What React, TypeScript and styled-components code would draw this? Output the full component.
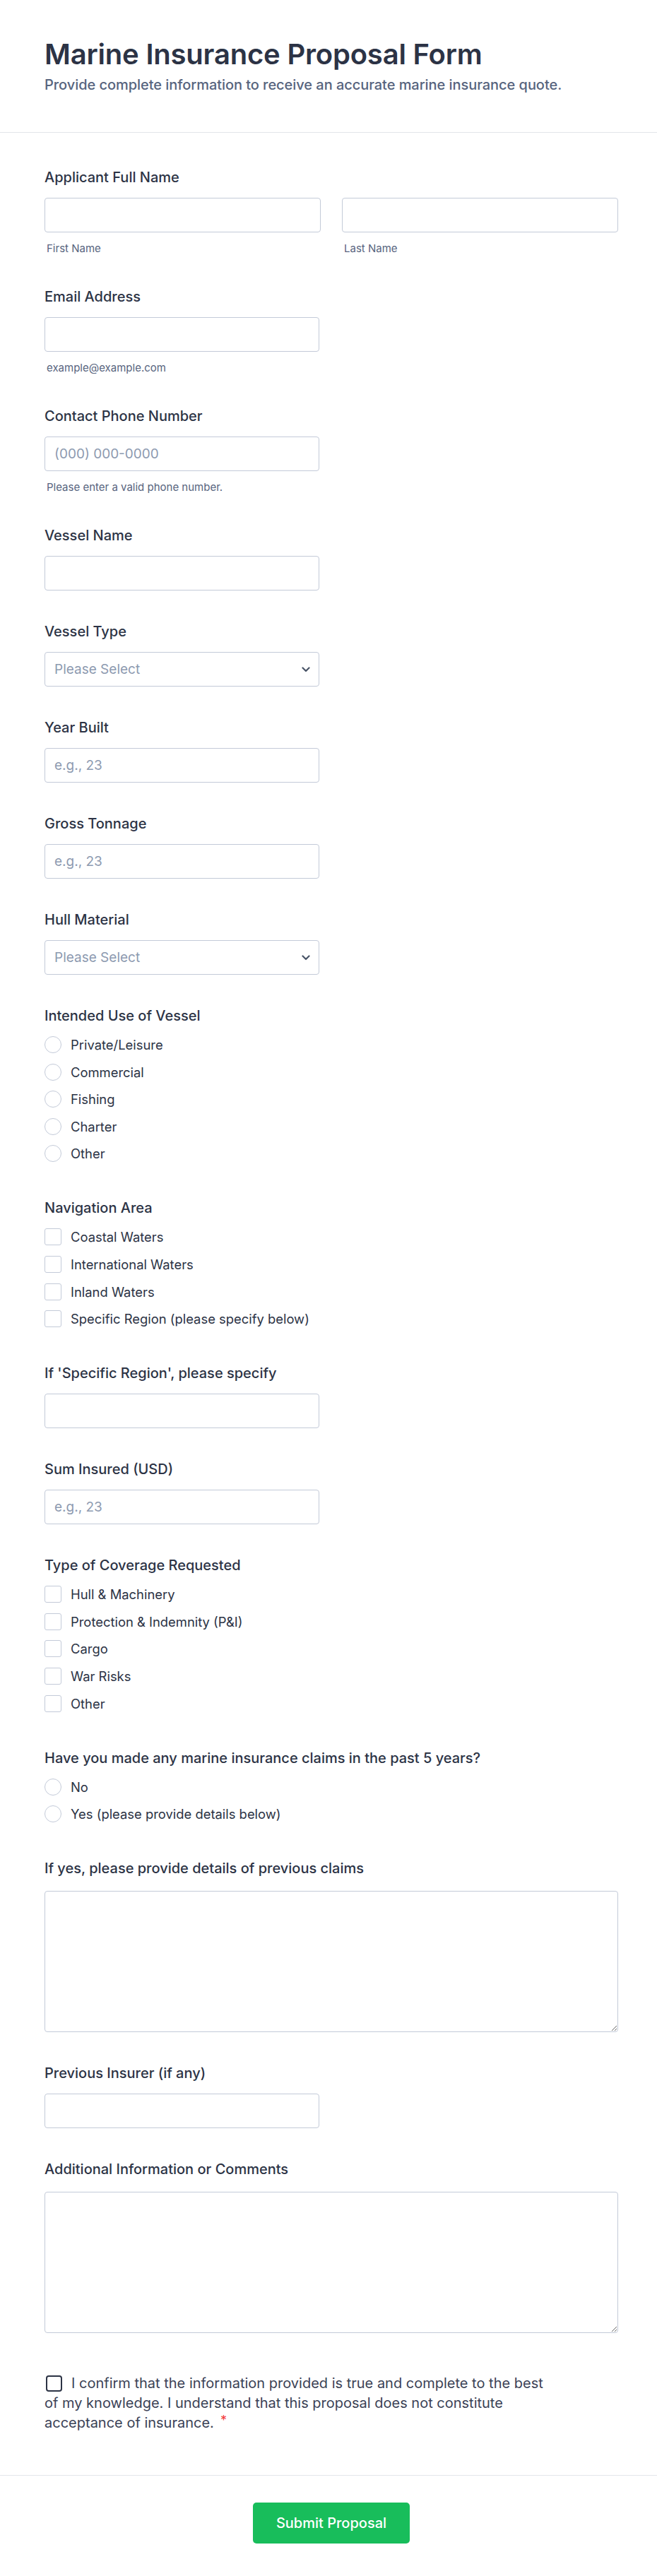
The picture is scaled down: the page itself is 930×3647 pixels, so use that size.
import React from "react";
import styled, { createGlobalStyle } from "styled-components";

const GlobalStyle = createGlobalStyle`
  * { box-sizing: border-box; }
  html, body { margin: 0; padding: 0; background: #ffffff; }
  body {
    font-family: Inter, "Noto Sans", "Liberation Sans", sans-serif;
    color: #2c3345;
    -webkit-font-smoothing: antialiased;
  }
`;

const Page = styled.div`
  width: 930px;
  min-height: 3647px;
  background: #ffffff;
  display: flex;
  flex-direction: column;
`;

const Header = styled.header`
  padding: 53px 55px 53px 63px;
  border-bottom: 1px solid #e3e5ea;
  display: flex;
  flex-direction: column;
  gap: 6px;
`;

const Title = styled.h1`
  margin: 0;
  font-size: 40px;
  line-height: 48px;
  font-weight: 600;
  color: #2c3345;
  letter-spacing: -0.2px;
`;

const Subtitle = styled.p`
  margin: 0;
  font-size: 20px;
  line-height: 27px;
  font-weight: 500;
  color: #57647e;
  letter-spacing: -0.05px;
`;

const Body = styled.main`
  padding: 51px 55px 60px 63px;
  display: flex;
  flex-direction: column;
  gap: 46px;
`;

const Field = styled.section`
  display: flex;
  flex-direction: column;
`;

const Label = styled.label<{ $gap?: number }>`
  font-size: 20px;
  line-height: 24px;
  font-weight: 500;
  color: #2c3345;
  margin-bottom: ${(p) => p.$gap ?? 17}px;
`;

const Row = styled.div`
  display: grid;
  grid-template-columns: 1fr 1fr;
  column-gap: 30px;
`;

const Col = styled.div`
  display: flex;
  flex-direction: column;
`;

const Input = styled.input<{ $full?: boolean }>`
  width: ${(p) => (p.$full ? "100%" : "389px")};
  height: 49px;
  border: 1px solid #c3cad8;
  border-radius: 4px;
  padding: 0 13px;
  font-family: inherit;
  font-size: 19px;
  color: #2c3345;
  background: #fff;
  outline: none;
  &::placeholder { color: #8d9ab0; }
`;

const SubLabel = styled.span`
  margin-top: 13px;
  margin-left: 3px;
  font-size: 15px;
  line-height: 20px;
  color: #57647e;
`;

const SelectWrap = styled.div`
  position: relative;
  width: 389px;
  height: 49px;
`;

const Select = styled.select`
  width: 100%;
  height: 100%;
  appearance: none;
  -webkit-appearance: none;
  border: 1px solid #c3cad8;
  border-radius: 4px;
  padding: 0 13px;
  font-family: inherit;
  font-size: 19px;
  color: #8d9ab0;
  background: #fff;
  outline: none;
`;

const Chevron = styled.svg`
  position: absolute;
  right: 13px;
  top: 50%;
  transform: translateY(-50%);
  pointer-events: none;
`;

const Options = styled.div`
  display: flex;
  flex-direction: column;
  gap: 14.6px;
  margin-bottom: 7px;
`;

const Option = styled.label`
  display: flex;
  align-items: center;
  gap: 13px;
  min-height: 24px;
  font-size: 18.4px;
  line-height: 24px;
  color: #2c3345;
`;

const Mark = styled.span<{ $round?: boolean }>`
  width: 24px;
  height: 24px;
  flex: none;
  border: 1px solid #c3cad8;
  border-radius: ${(p) => (p.$round ? "50%" : "3px")};
  background: #fff;
`;

const TextArea = styled.textarea`
  width: 100%;
  height: 200px;
  border: 1px solid #c3cad8;
  border-radius: 4px;
  padding: 10px 13px;
  font-family: inherit;
  font-size: 19px;
  resize: vertical;
  outline: none;
  display: block;
`;

const Confirm = styled.p`
  margin: 12px 0 0 0;
  max-width: 720px;
  font-size: 20px;
  line-height: 27.7px;
  color: #3b4256;
`;

const ConfirmBox = styled.span`
  display: inline-block;
  width: 23px;
  height: 23px;
  border: 2px solid #2c3345;
  border-radius: 4px;
  vertical-align: -5px;
  margin: 0 13px 0 2px;
`;

const Req = styled.sup`
  color: #f23a3c;
  font-size: 18px;
  margin-left: 9px;
  vertical-align: 4px;
  line-height: 0;
`;

const Footer = styled.footer`
  border-top: 1px solid #e3e5ea;
  padding: 38px 55px 50px 63px;
  display: flex;
  justify-content: center;
`;

const Submit = styled.button`
  width: 222px;
  height: 58px;
  border: none;
  border-radius: 5px;
  background: #18bd5b;
  color: #fff;
  font-family: inherit;
  font-size: 20px;
  font-weight: 500;
  cursor: pointer;
`;

const ChevronIcon = () => (
  <Chevron width="12" height="8" viewBox="0 0 12 8">
    <path d="M1.5 1.5 L6 6 L10.5 1.5" fill="none" stroke="#4a5568" strokeWidth="2.2" strokeLinecap="round" strokeLinejoin="round" />
  </Chevron>
);

const TextField = ({ label, placeholder, sub }: { label: string; placeholder?: string; sub?: string }) => (
  <Field>
    <Label>{label}</Label>
    <Input placeholder={placeholder} />
    {sub && <SubLabel>{sub}</SubLabel>}
  </Field>
);

const SelectField = ({ label }: { label: string }) => (
  <Field>
    <Label>{label}</Label>
    <SelectWrap>
      <Select defaultValue="">
        <option value="">Please Select</option>
      </Select>
      <ChevronIcon />
    </SelectWrap>
  </Field>
);

const ChoiceField = ({ label, items, round }: { label: string; items: string[]; round?: boolean }) => (
  <Field>
    <Label>{label}</Label>
    <Options>
      {items.map((it) => (
        <Option key={it}>
          <Mark $round={round} />
          {it}
        </Option>
      ))}
    </Options>
  </Field>
);

const AreaField = ({ label }: { label: string }) => (
  <Field>
    <Label $gap={20}>{label}</Label>
    <TextArea />
  </Field>
);

export default function App() {
  return (
    <Page>
      <GlobalStyle />
      <Header>
        <Title>Marine Insurance Proposal Form</Title>
        <Subtitle>Provide complete information to receive an accurate marine insurance quote.</Subtitle>
      </Header>
      <Body>
        <Field>
          <Label>Applicant Full Name</Label>
          <Row>
            <Col>
              <Input $full />
              <SubLabel>First Name</SubLabel>
            </Col>
            <Col>
              <Input $full />
              <SubLabel>Last Name</SubLabel>
            </Col>
          </Row>
        </Field>
        <TextField label="Email Address" sub="example@example.com" />
        <TextField label="Contact Phone Number" placeholder="(000) 000-0000" sub="Please enter a valid phone number." />
        <TextField label="Vessel Name" />
        <SelectField label="Vessel Type" />
        <TextField label="Year Built" placeholder="e.g., 23" />
        <TextField label="Gross Tonnage" placeholder="e.g., 23" />
        <SelectField label="Hull Material" />
        <ChoiceField label="Intended Use of Vessel" round items={["Private/Leisure", "Commercial", "Fishing", "Charter", "Other"]} />
        <ChoiceField label="Navigation Area" items={["Coastal Waters", "International Waters", "Inland Waters", "Specific Region (please specify below)"]} />
        <TextField label="If 'Specific Region', please specify" />
        <TextField label="Sum Insured (USD)" placeholder="e.g., 23" />
        <ChoiceField label="Type of Coverage Requested" items={["Hull & Machinery", "Protection & Indemnity (P&I)", "Cargo", "War Risks", "Other"]} />
        <ChoiceField label="Have you made any marine insurance claims in the past 5 years?" round items={["No", "Yes (please provide details below)"]} />
        <AreaField label="If yes, please provide details of previous claims" />
        <TextField label="Previous Insurer (if any)" />
        <AreaField label="Additional Information or Comments" />
        <Confirm>
          <ConfirmBox />
          I confirm that the information provided is true and complete to the best of my knowledge. I understand that this proposal does not constitute acceptance of insurance.
          <Req>*</Req>
        </Confirm>
      </Body>
      <Footer>
        <Submit>Submit Proposal</Submit>
      </Footer>
    </Page>
  );
}
